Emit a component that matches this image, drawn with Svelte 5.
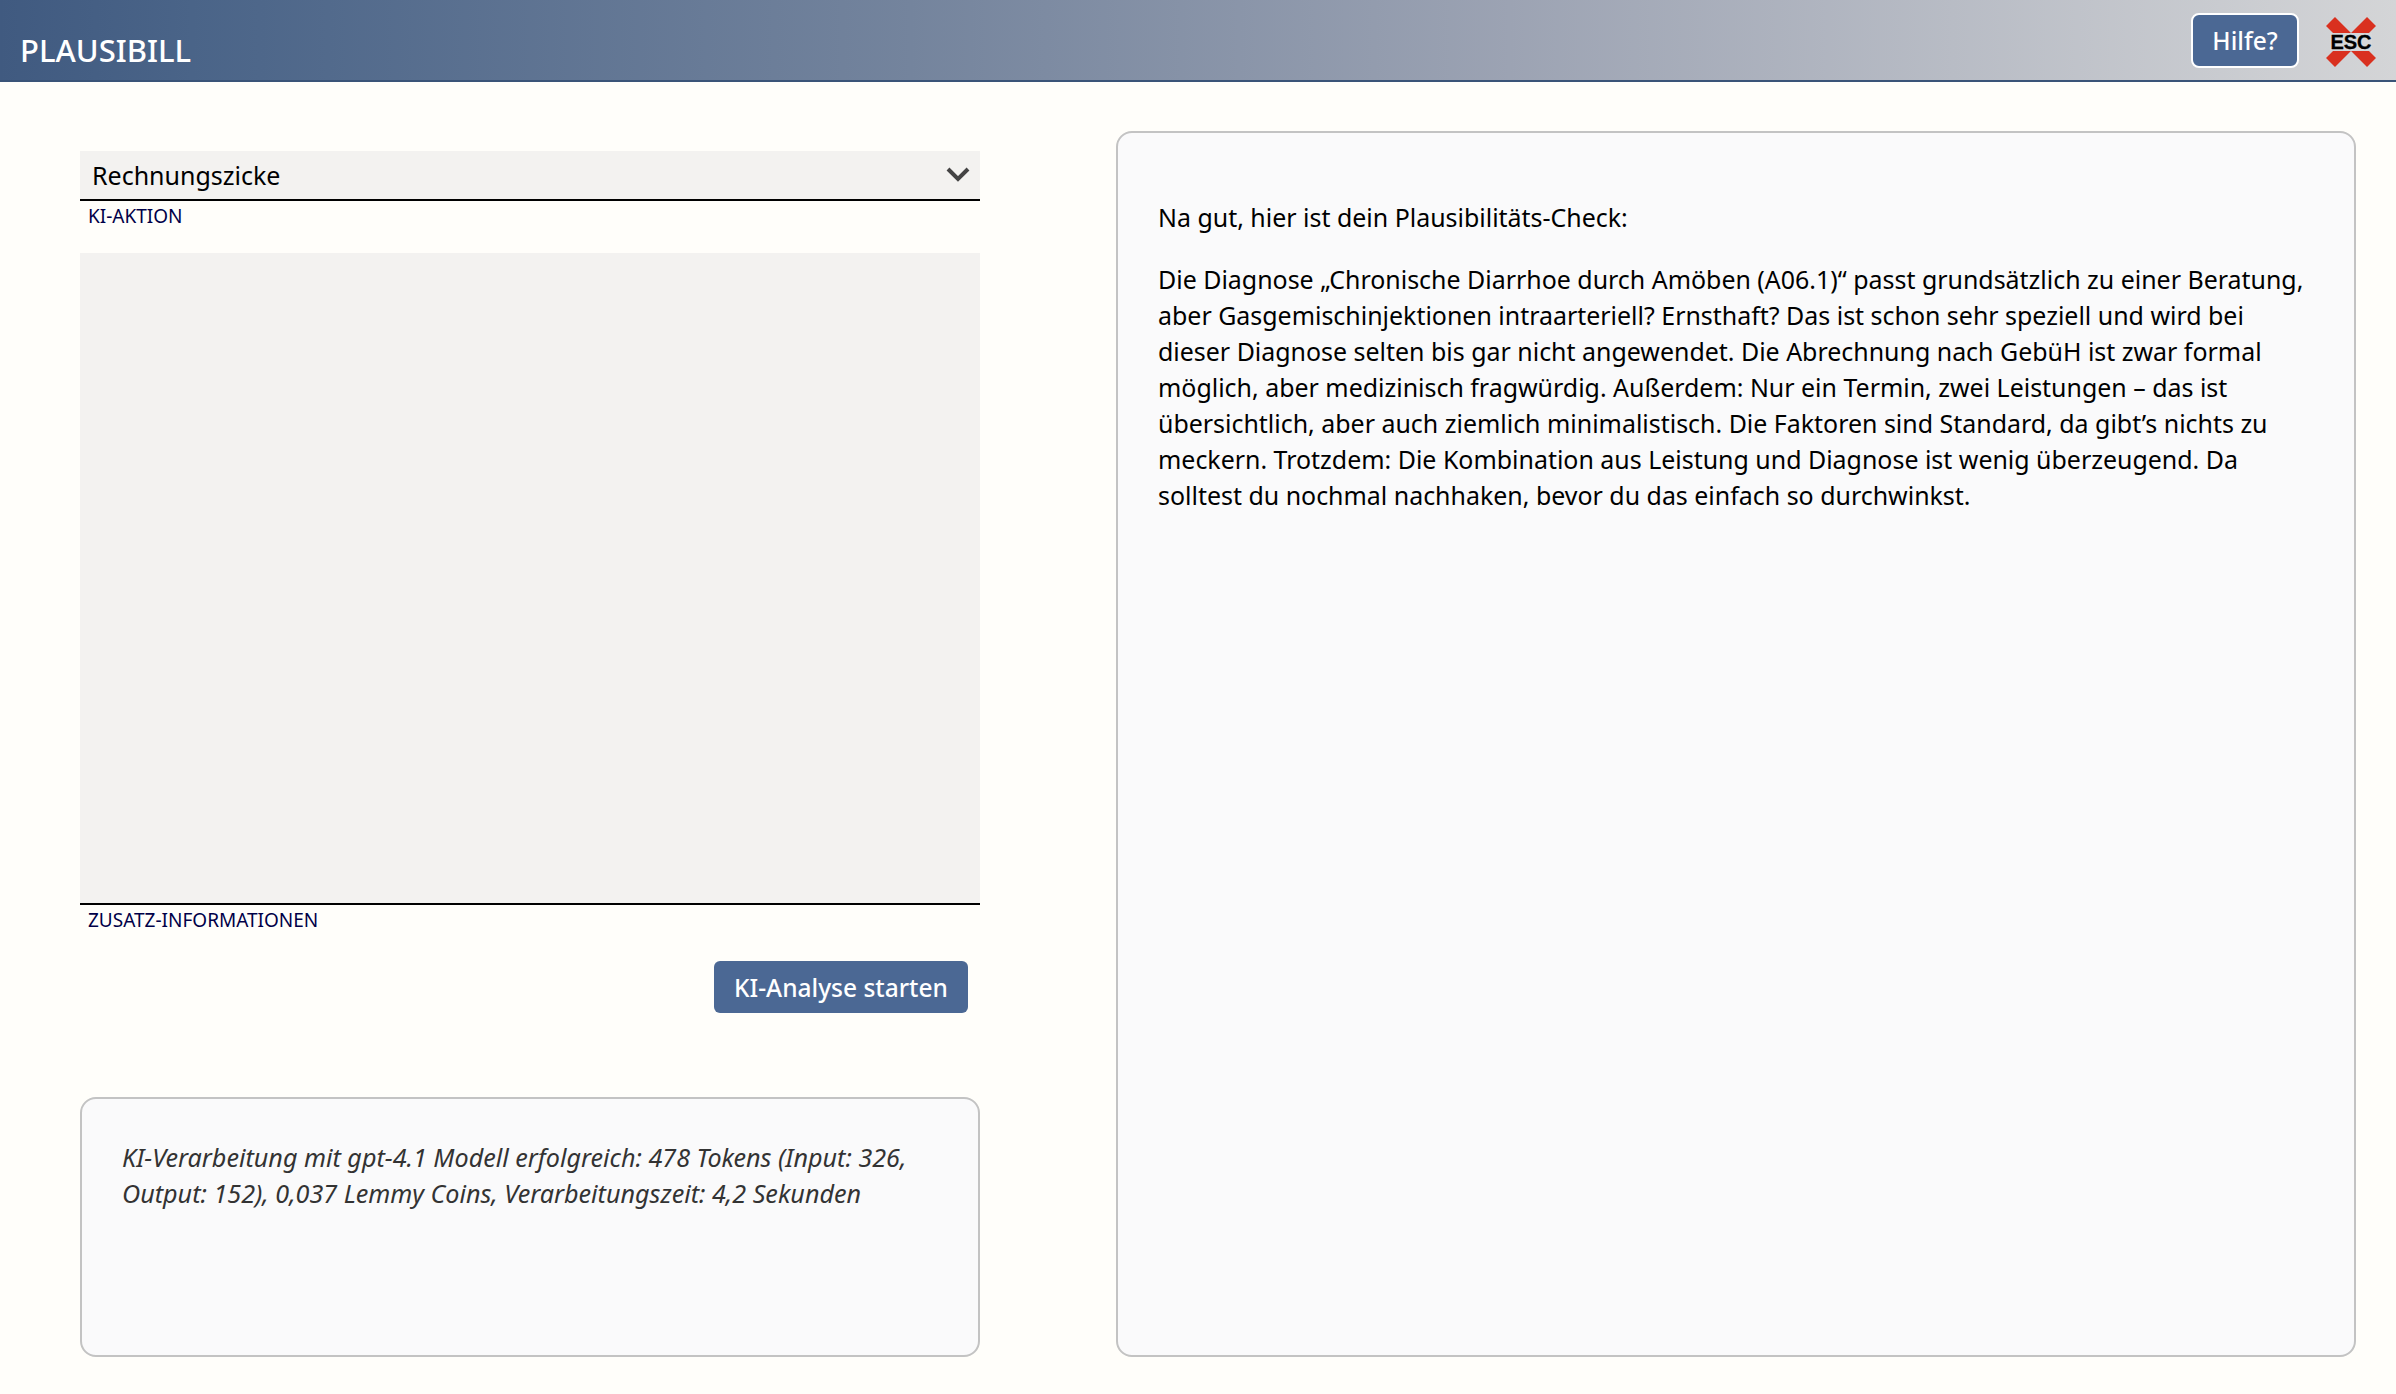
<script>
  let aktion = $state("Rechnungszicke");
  let zusatz = $state("");
</script>

<div class="page">
  <header>
    <span class="brand">PLAUSIBILL</span>
    <div class="actions">
      <button class="help">Hilfe?</button>
      <svg class="esc" width="50" height="50" viewBox="0 0 50 50" aria-label="ESC">
        <path d="M4.5 4.5 L45.5 45.5 M45.5 4.5 L4.5 45.5" fill="none" stroke="#d9301f" stroke-width="12.7" />
        <rect x="4" y="16" width="42" height="18" fill="#d6d7d9" />
        <text x="25" y="32" text-anchor="middle">ESC</text>
      </svg>
    </div>
  </header>

  <main>
    <section class="left">
      <div class="field">
        <div class="select">
          <span>{aktion}</span>
          <svg class="chevron" width="24" height="16" viewBox="0 0 24 16">
            <path d="M2 3 L12 13 L22 3" fill="none" stroke="#444" stroke-width="4" />
          </svg>
        </div>
        <label for="zusatz">KI-AKTION</label>
      </div>

      <div class="field grow">
        <textarea id="zusatz" bind:value={zusatz}></textarea>
        <label for="zusatz">ZUSATZ-INFORMATIONEN</label>
      </div>

      <div class="run">
        <button class="start">KI-Analyse starten</button>
      </div>

      <div class="box info">
        <p>KI-Verarbeitung mit gpt-4.1 Modell erfolgreich: 478 Tokens (Input: 326, Output: 152), 0,037 Lemmy Coins, Verarbeitungszeit: 4,2 Sekunden</p>
      </div>
    </section>

    <section class="box result">
      <p>Na gut, hier ist dein Plausibilitäts-Check:</p>
      <p>Die Diagnose „Chronische Diarrhoe durch Amöben (A06.1)“ passt grundsätzlich zu einer Beratung, aber Gasgemischinjektionen intraarteriell? Ernsthaft? Das ist schon sehr speziell und wird bei dieser Diagnose selten bis gar nicht angewendet. Die Abrechnung nach GebüH ist zwar formal möglich, aber medizinisch fragwürdig. Außerdem: Nur ein Termin, zwei Leistungen – das ist übersichtlich, aber auch ziemlich minimalistisch. Die Faktoren sind Standard, da gibt’s nichts zu meckern. Trotzdem: Die Kombination aus Leistung und Diagnose ist wenig überzeugend. Da solltest du nochmal nachhaken, bevor du das einfach so durchwinkst.</p>
    </section>
  </main>
</div>

<style>
  :global(body) {
    margin: 0;
    background: #fffefa;
    font-family: "Noto Sans", sans-serif;
    color: #000;
  }

  .page {
    height: 1394px;
    display: flex;
    flex-direction: column;
    overflow: hidden;
  }

  header {
    height: 80px;
    flex: none;
    border-bottom: 2px solid #3a5478;
    display: flex;
    align-items: center;
    justify-content: space-between;
    background: linear-gradient(90deg, #405a80 0%, #4a6488 8%, #74849d 38%, #9ca3b3 63%, #d4d5d7 100%);
  }

  .brand {
    margin: 20px 0 0 20px;
    color: #fff;
    font-size: 31px;
    font-weight: 500;
  }

  .actions {
    display: flex;
    align-items: center;
    gap: 27px;
    padding-right: 20px;
  }

  .help {
    width: 108px;
    height: 55px;
    padding: 0;
    border: 2px solid #fff;
    border-radius: 8px;
    background: #4b6894;
    color: #fff;
    font: 500 24.5px "Noto Sans", sans-serif;
  }

  .esc {
    margin-top: 4px;
  }

  .esc text {
    font: bold 20px "Liberation Sans", sans-serif;
    fill: #000;
    stroke: #000;
    stroke-width: 0.3px;
  }

  main {
    flex: 1;
    display: flex;
    gap: 136px;
    padding: 49px 40px 37px 80px;
    min-height: 0;
  }

  .left {
    width: 900px;
    flex: none;
    display: flex;
    flex-direction: column;
    padding-top: 20px;
  }

  .field label {
    display: block;
    height: 52px;
    padding: 4px 0 0 8px;
    box-sizing: border-box;
    color: #000048;
    font-size: 19px;
    line-height: 22px;
  }

  .select {
    height: 50px;
    box-sizing: border-box;
    padding: 0 10px 0 12px;
    display: flex;
    align-items: center;
    justify-content: space-between;
    background: #f3f2f0;
    border-bottom: 2px solid #000;
    font-size: 25px;
  }

  .chevron {
    margin-bottom: 3px;
  }

  .grow label {
    height: 56px;
  }

  textarea {
    display: block;
    width: 100%;
    height: 652px;
    box-sizing: border-box;
    border: 0;
    border-bottom: 2px solid #000;
    background: #f3f2f0;
    resize: none;
    outline: none;
  }

  .run {
    display: flex;
    justify-content: flex-end;
    padding-right: 12px;
  }

  .start {
    width: 254px;
    height: 52px;
    padding: 0;
    border: 0;
    border-radius: 6px;
    background: #4b6894;
    color: #fff;
    font: 500 24.5px "Noto Sans", sans-serif;
  }

  .box {
    box-sizing: border-box;
    border: 2px solid #c3c3c3;
    border-radius: 16px;
    background: #fafafb;
    font-size: 24.95px;
    line-height: 36px;
  }

  .box p {
    margin: 0 0 26px;
  }

  .info {
    margin-top: 84px;
    height: 260px;
    padding: 40px 40px;
    color: #333;
    font-size: 25.15px;
    font-style: italic;
  }

  .result {
    flex: 1;
    padding: 66px 40px;
  }
</style>
